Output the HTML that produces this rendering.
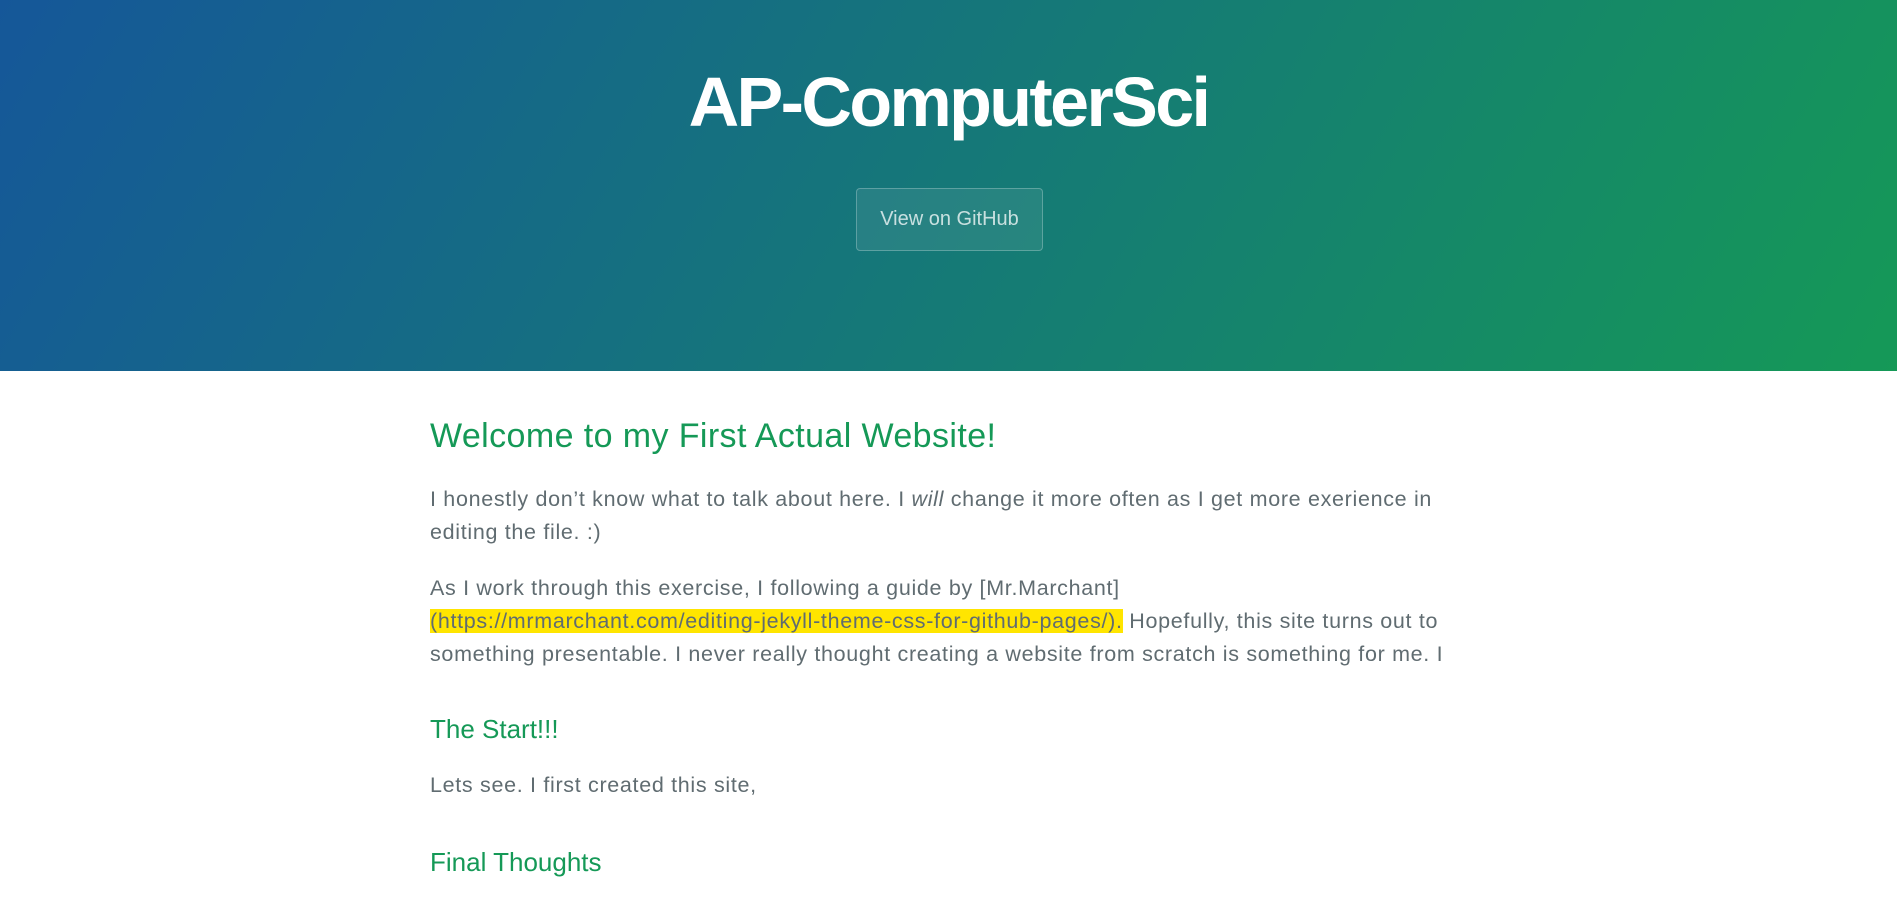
<!DOCTYPE html>
<html><head><meta charset="utf-8"><style>
*{margin:0;padding:0;box-sizing:border-box}
html,body{width:1897px;height:901px;overflow:hidden;background:#fff;font-family:"Liberation Sans",sans-serif}
.hdr{height:371px;background-image:linear-gradient(120deg,#155799,#159957);text-align:center;color:#fff;position:relative}
.hdr h1{position:absolute;left:0;right:0;top:60px;font-size:70px;font-weight:700;letter-spacing:-2.6px;line-height:84px}
.btn{position:absolute;left:856px;top:188px;width:187px;height:63px;border:1px solid rgba(255,255,255,0.25);background:rgba(255,255,255,0.08);border-radius:4px;color:rgba(255,255,255,0.75);font-size:20px;line-height:61px;text-align:center}
.c{position:absolute;left:430px;top:371px;width:1100px;color:#606c71;white-space:nowrap}
.c h1,.c h2{color:#159957;font-weight:400;position:absolute;left:0}
.c h1{top:46px;font-size:34px;letter-spacing:0.4px}
.c h2{font-size:26px}
.c p{position:absolute;left:0;font-size:21.5px;line-height:33px;letter-spacing:0.68px}
.hl{background:#ffe500;color:#606c71}
</style></head><body>
<div class="hdr"><h1>AP-ComputerSci</h1><div class="btn">View on GitHub</div></div>
<div class="c">
<h1>Welcome to my First Actual Website!</h1>
<p style="top:112px">I honestly don’t know what to talk about here. I <i>will</i> change it more often as I get more exerience in<br>editing the file. :)</p>
<p style="top:201px">As I work through this exercise, I following a guide by [Mr.Marchant]<br><span class="hl">(https://mrmarchant.com/editing-jekyll-theme-css-for-github-pages/).</span> Hopefully, this site turns out to<br>something presentable. I never really thought creating a website from scratch is something for me. I</p>
<h2 style="top:343px">The Start!!!</h2>
<p style="top:398px">Lets see. I first created this site,</p>
<h2 style="top:476px">Final Thoughts</h2>
</div>
</body></html>
